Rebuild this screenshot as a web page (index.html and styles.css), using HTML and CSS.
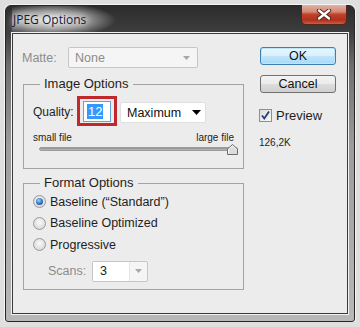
FILE: index.html
```html
<!DOCTYPE html>
<html>
<head>
  <meta charset="UTF-8">
  <title>JPEG Options</title>
  <link rel="stylesheet" href="styles.css">
</head>
<body>
  <div class="window">
    <div class="titlebar">
      <span class="title">JPEG Options</span>
      <div class="close">
        <svg width="16" height="11" viewBox="0 0 16 11">
          <path d="M3 1.5 L13 9.5 M13 1.5 L3 9.5" stroke="#4a1c14" stroke-width="4.2" stroke-linecap="round"/>
          <path d="M3 1.5 L13 9.5 M13 1.5 L3 9.5" stroke="#fff" stroke-width="2.4" stroke-linecap="round"/>
        </svg>
      </div>
    </div>

    <div class="client">
      <!-- left column: matte + option groups -->
      <div class="main">
        <div class="matte-row">
          <span class="matte-label">Matte:</span>
          <div class="dropdown disabled matte-drop">
            <span>None</span>
            <svg class="arrow" width="7" height="4" viewBox="0 0 7 4"><path d="M0 0 H7 L3.5 4 Z" fill="#a8a8a8"/></svg>
          </div>
        </div>

        <fieldset class="group image-group">
          <legend>Image Options</legend>
          <div class="quality-row">
            <span class="quality-label">Quality:</span>
            <div class="highlight">
              <div class="qinput"><span class="sel">12</span></div>
            </div>
            <div class="dropdown quality-drop">
              <span>Maximum</span>
              <svg class="arrow" width="9" height="5" viewBox="0 0 9 5"><path d="M0 0 H9 L4.5 5 Z" fill="#000"/></svg>
            </div>
          </div>
          <div class="size-row">
            <span>small file</span>
            <span>large file</span>
          </div>
          <div class="slider">
            <div class="track"></div>
            <svg class="thumb" width="11" height="11" viewBox="0 0 11 11">
              <path d="M0.5 10.5 V5 L5.5 0.5 L10.5 5 V10.5 Z" fill="#dcdcdc" stroke="#6d6d6d"/>
              <path d="M1.5 9.5 V5.4 L5.5 1.8 L9.5 5.4" fill="none" stroke="#fafafa"/>
            </svg>
          </div>
        </fieldset>

        <fieldset class="group format-group">
          <legend>Format Options</legend>
          <label class="radio-row"><span class="radio on"></span>Baseline (“Standard”)</label>
          <label class="radio-row"><span class="radio"></span>Baseline Optimized</label>
          <label class="radio-row"><span class="radio"></span>Progressive</label>
          <div class="scans-row">
            <span class="scans-label">Scans:</span>
            <div class="dropdown disabled scans-drop">
              <span class="scans-val">3</span>
              <span class="scans-btn">
                <svg width="7" height="4" viewBox="0 0 7 4"><path d="M0 0 H7 L3.5 4 Z" fill="#a8a8a8"/></svg>
              </span>
            </div>
          </div>
        </fieldset>
      </div>

      <!-- right column: buttons + preview -->
      <div class="side">
        <div class="btn default">OK</div>
        <div class="btn">Cancel</div>
        <label class="check-row">
          <span class="checkbox">
            <svg width="11" height="11" viewBox="0 0 11 11"><path d="M2 5.5 L4.3 8.5 L9 1.5" fill="none" stroke="#233f7a" stroke-width="1.8"/></svg>
          </span>
          Preview
        </label>
        <div class="filesize">126,2K</div>
      </div>
    </div>
  </div>
</body>
</html>
```

FILE: styles.css
```css
body { margin: 0; background: #dfdfdf; font-family: "Liberation Sans", Arial, sans-serif; font-size: 12px; color: #1e1e1e; }

.window {
  margin: 5px 0 0 5px; width: 350px; height: 317px; box-sizing: border-box;
  border: 1px solid #262626; border-radius: 6px 6px 3px 3px;
  background: linear-gradient(to bottom, #2c2c2c 0, #3e3e3e 27px, #6e6e6e 60px, #9c9c9c 140px, #b8b8b8 100%);
  box-shadow: 0 0 0 1px #f4f4f4;
  display: flex; flex-direction: column; padding: 0 6px 7px 6px;
}

.titlebar {
  height: 27px; display: flex; align-items: center; justify-content: space-between;
  background: radial-gradient(ellipse 64px 17px at 40px 14px, rgba(240,240,240,0.95) 0, rgba(215,215,215,0.6) 55%, rgba(120,120,120,0) 100%);
}
.title {
  font-family: "Open Sans", "Liberation Sans", sans-serif; font-size: 12px; color: #14183a; padding-left: 1px; margin-top: -1px;
  text-shadow: 0 0 6px #fff, 0 0 10px #fff;
}
.close {
  align-self: flex-start; margin-top: -1px; margin-right: 1px; width: 46px; height: 20px; box-sizing: border-box;
  border: 1px solid #5a2418; border-top: none; border-radius: 0 0 5px 5px;
  background: linear-gradient(to bottom, #e2b1a2 0, #d28b78 35%, #c0412c 50%, #b1301c 80%, #c4604a 100%);
  display: flex; align-items: center; justify-content: center;
}

.client {
  flex: 1; display: flex; border: 1px solid #3a3a3a; background: #ececec;
  box-shadow: 0 0 0 1px #f3f3f3; padding: 13px 0 0 10px;
}
.main { width: 221px; }
.side { margin-left: 16px; width: 76px; }

/* dropdowns */
.dropdown { box-sizing: border-box; display: flex; align-items: center; justify-content: space-between; background: #fff; border: 1px solid #e0e0e0; border-radius: 2px; }
.dropdown.disabled { background: #f5f5f5; border-color: #c6c6c6; color: #8c8c8c; }
.arrow { flex: none; }

.matte-row { display: flex; align-items: center; height: 21px; margin-left: -1px; }
.matte-label { width: 46px; color: #8c8c8c; font-size: 12.5px; }
.matte-drop { width: 130px; height: 21px; padding: 0 7px 0 6px; font-size: 12.5px; }

/* groups */
.group { margin: 0; border: 1px solid #a3a3a3; padding: 0 9px; }
.group legend { font-size: 13px; line-height: 16px; padding: 0 4px; margin-left: 7px; color: #1e1e1e; }
.image-group { margin-top: 8px; padding-bottom: 13px; }
.format-group { margin-top: 6px; padding-top: 0; padding-bottom: 7px; }

.quality-row { display: flex; align-items: center; margin-top: 4px; }
.quality-label { width: 44px; font-size: 12px; margin-top: 2px; }
.highlight { box-sizing: border-box; width: 40px; height: 30px; border: 3px solid #c1282e; padding: 2px 0 0 3px; }
.qinput { box-sizing: border-box; width: 28px; height: 21px; background: #fff; border: 1px solid #6aa0d2; padding: 2px 0 0 3px; }
.sel { background: #3399ff; color: #fff; font-size: 13px; line-height: 15px; padding: 0 1px; display: inline-block; }
.quality-drop { width: 86px; height: 21px; margin-left: 3px; margin-top: 3px; padding: 0 4px 0 6px; font-size: 12.5px; color: #111; }

.size-row { display: flex; justify-content: space-between; font-size: 10px; margin-top: 6px; }
.slider { position: relative; height: 11px; margin: 1px 0 0 6px; }
.track { position: absolute; left: 0; right: -4px; top: 3px; height: 4px; border-radius: 2px; background: linear-gradient(to bottom, #8a8a8a, #c0c0c0); border: 1px solid #9c9c9c; box-sizing: border-box; }
.thumb { position: absolute; right: -4px; top: 0; }

.radio-row { display: flex; align-items: center; height: 21.5px; font-size: 12.5px; }
.radio {
  box-sizing: border-box; width: 13px; height: 13px; border-radius: 50%; margin-right: 4px;
  border: 1px solid #9a9a9a; background: radial-gradient(circle at 50% 40%, #fafafa 0, #e2e2e2 55%, #cfcfcf 100%);
  display: flex; align-items: center; justify-content: center;
}
.radio.on::after { content: ""; width: 7px; height: 7px; border-radius: 50%; background: radial-gradient(circle at 40% 35%, #9fd0f6 0, #2b73c4 55%, #14427e 100%); }

.scans-row { display: flex; align-items: center; margin-top: 5px; padding-left: 15px; }
.scans-label { width: 44px; color: #8c8c8c; font-size: 12.5px; }
.scans-drop { width: 56px; height: 21px; padding: 0; }
.scans-val { flex: 1; height: 100%; display: flex; align-items: center; padding-left: 7px; background: #fff; color: #222; font-size: 12.5px; border-right: 1px solid #e4e4e4; }
.scans-btn { width: 17px; display: flex; justify-content: center; }

/* right column */
.btn {
  box-sizing: border-box; height: 18px; display: flex; align-items: center; justify-content: center;
  border: 1px solid #707070; border-radius: 3px; font-size: 12.5px; color: #111;
  background: linear-gradient(to bottom, #f3f3f3 0, #ebebeb 49%, #dddddd 50%, #cfcfcf 100%);
}
.btn.default { border-color: #3c7fb1; background: linear-gradient(to bottom, #eaf6fd 0, #d9f0fc 49%, #bee6fd 50%, #a7d9f5 100%); box-shadow: inset 0 0 0 1px #c0e4f7; }
.btn + .btn { margin-top: 10px; }

.check-row { display: flex; align-items: center; margin-top: 15px; font-size: 13px; margin-left: -1px; }
.checkbox { box-sizing: border-box; width: 13px; height: 13px; border: 1px solid #8e8f8f; background: linear-gradient(135deg, #dcdcdc, #f8f8f8); margin-right: 4px; display: flex; align-items: center; justify-content: center; }
.filesize { font-size: 10px; margin-top: 14px; margin-left: -1px; }
```
